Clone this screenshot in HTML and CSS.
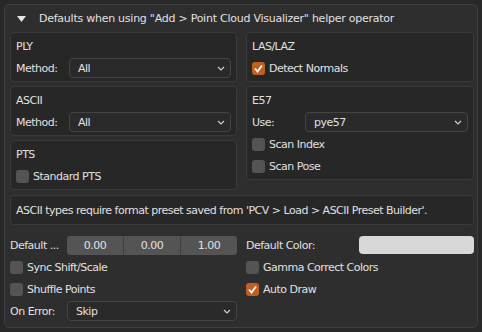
FILE: index.html
```html
<!DOCTYPE html>
<html lang="en">
<head>
    <meta charset="UTF-8">
    <title>Point Cloud Visualizer - Defaults</title>
    <link rel="stylesheet" href="styles.css">
</head>
<body>
    <div class="panel">
        <div class="panel-head">
            <svg class="caret" width="9" height="6" viewBox="0 0 9 6"><path d="M0 0 H9 L4.5 6 Z" fill="#e6e6e6"/></svg>
            <span>Defaults when using "Add &gt; Point Cloud Visualizer" helper operator</span>
        </div>
        <div class="panel-body">
            <div class="cols">
                <div class="col">
                    <div class="box">
                        <div class="row">PLY</div>
                        <div class="row">
                            <span class="lbl">Method:</span>
                            <div class="select">All<svg class="chev" width="8" height="5" viewBox="0 0 8 5"><path d="M1 1 L4 4 L7 1" fill="none" stroke="#cfcfcf" stroke-width="1.2"/></svg></div>
                        </div>
                    </div>
                    <div class="box">
                        <div class="row">ASCII</div>
                        <div class="row">
                            <span class="lbl">Method:</span>
                            <div class="select">All<svg class="chev" width="8" height="5" viewBox="0 0 8 5"><path d="M1 1 L4 4 L7 1" fill="none" stroke="#cfcfcf" stroke-width="1.2"/></svg></div>
                        </div>
                    </div>
                    <div class="box">
                        <div class="row">PTS</div>
                        <div class="row"><span class="check"></span>Standard PTS</div>
                    </div>
                </div>
                <div class="col">
                    <div class="box">
                        <div class="row">LAS/LAZ</div>
                        <div class="row"><span class="check on"><svg width="13" height="13" viewBox="0 0 13 13"><path d="M3 6.5 L5.5 9.5 L10 3.5" fill="none" stroke="#fff" stroke-width="1.8"/></svg></span>Detect Normals</div>
                    </div>
                    <div class="box">
                        <div class="row">E57</div>
                        <div class="row">
                            <span class="lbl">Use:</span>
                            <div class="select">pye57<svg class="chev" width="8" height="5" viewBox="0 0 8 5"><path d="M1 1 L4 4 L7 1" fill="none" stroke="#cfcfcf" stroke-width="1.2"/></svg></div>
                        </div>
                        <div class="row"><span class="check"></span>Scan Index</div>
                        <div class="row"><span class="check"></span>Scan Pose</div>
                    </div>
                </div>
            </div>
            <div class="box info">
                <div class="row">ASCII types require format preset saved from 'PCV &gt; Load &gt; ASCII Preset Builder'.</div>
            </div>
            <div class="cols bottom">
                <div class="col">
                    <div class="row">
                        <span class="lbl wide">Default ...</span>
                        <div class="vector"><span>0.00</span><span>0.00</span><span>1.00</span></div>
                    </div>
                    <div class="row"><span class="check"></span>Sync Shift/Scale</div>
                    <div class="row"><span class="check"></span>Shuffle Points</div>
                    <div class="row">
                        <span class="lbl wide">On Error:</span>
                        <div class="select">Skip<svg class="chev" width="8" height="5" viewBox="0 0 8 5"><path d="M1 1 L4 4 L7 1" fill="none" stroke="#cfcfcf" stroke-width="1.2"/></svg></div>
                    </div>
                </div>
                <div class="col">
                    <div class="row">
                        <span class="lbl half">Default Color:</span>
                        <div class="swatch"></div>
                    </div>
                    <div class="row"><span class="check"></span>Gamma Correct Colors</div>
                    <div class="row"><span class="check on"><svg width="13" height="13" viewBox="0 0 13 13"><path d="M3 6.5 L5.5 9.5 L10 3.5" fill="none" stroke="#fff" stroke-width="1.8"/></svg></span>Auto Draw</div>
                </div>
            </div>
        </div>
    </div>
</body>
</html>
```

FILE: styles.css
```css
body {
    margin: 0;
    padding: 4px;
    background-color: #282828;
    font-family: 'DejaVu Sans', sans-serif;
    font-size: 11px;
    letter-spacing: -0.5px;
    color: #e0e0e0;
}
.panel {
    width: 472px;
    height: 322px;
    background-color: #2e2e2e;
    border: 1px solid #3e3e3e;
    border-radius: 5px;
}
.panel-head {
    height: 27px;
    display: flex;
    align-items: center;
    padding-left: 12px;
    gap: 13px;
    letter-spacing: -0.25px;
}
.panel-body {
    padding: 0 3px 6px 5px;
}
.cols {
    display: grid;
    grid-template-columns: 227px 1fr;
    gap: 9px;
    align-items: start;
}
.col {
    display: flex;
    flex-direction: column;
    gap: 4px;
}
.box {
    background-color: #272727;
    border: 1px solid #3a3a3a;
    border-radius: 4px;
    padding: 3px 5px;
    display: flex;
    flex-direction: column;
    gap: 2px;
}
.row {
    height: 20px;
    display: flex;
    align-items: center;
    white-space: nowrap;
}
.lbl {
    width: 53px;
    flex: none;
}
.lbl.wide {
    width: 57px;
}
.lbl.half {
    width: 113px;
}
.select {
    flex: 1;
    height: 18px;
    display: flex;
    align-items: center;
    justify-content: space-between;
    padding: 0 5px 0 8px;
    background-color: #2a2a2a;
    border: 1px solid #444444;
    border-radius: 4px;
}
.check {
    width: 13px;
    height: 13px;
    flex: none;
    margin-right: 4px;
    background-color: #545454;
    border-radius: 3px;
}
.check.on {
    background-color: #bd6020;
}
.check svg {
    display: block;
}
.info {
    margin-top: 5px;
    padding: 4px 5px;
}
.bottom {
    margin-top: 10px;
}
.bottom .col {
    gap: 2px;
}
.vector {
    flex: 1;
    height: 19px;
    display: flex;
    border-radius: 4px;
    overflow: hidden;
    gap: 1px;
    background-color: #3f3f3f;
}
.vector span {
    flex: 1;
    display: flex;
    align-items: center;
    justify-content: center;
    background-color: #545454;
}
.swatch {
    flex: 1;
    height: 18px;
    background-color: #d8d8d8;
    border-radius: 4px;
}
```
